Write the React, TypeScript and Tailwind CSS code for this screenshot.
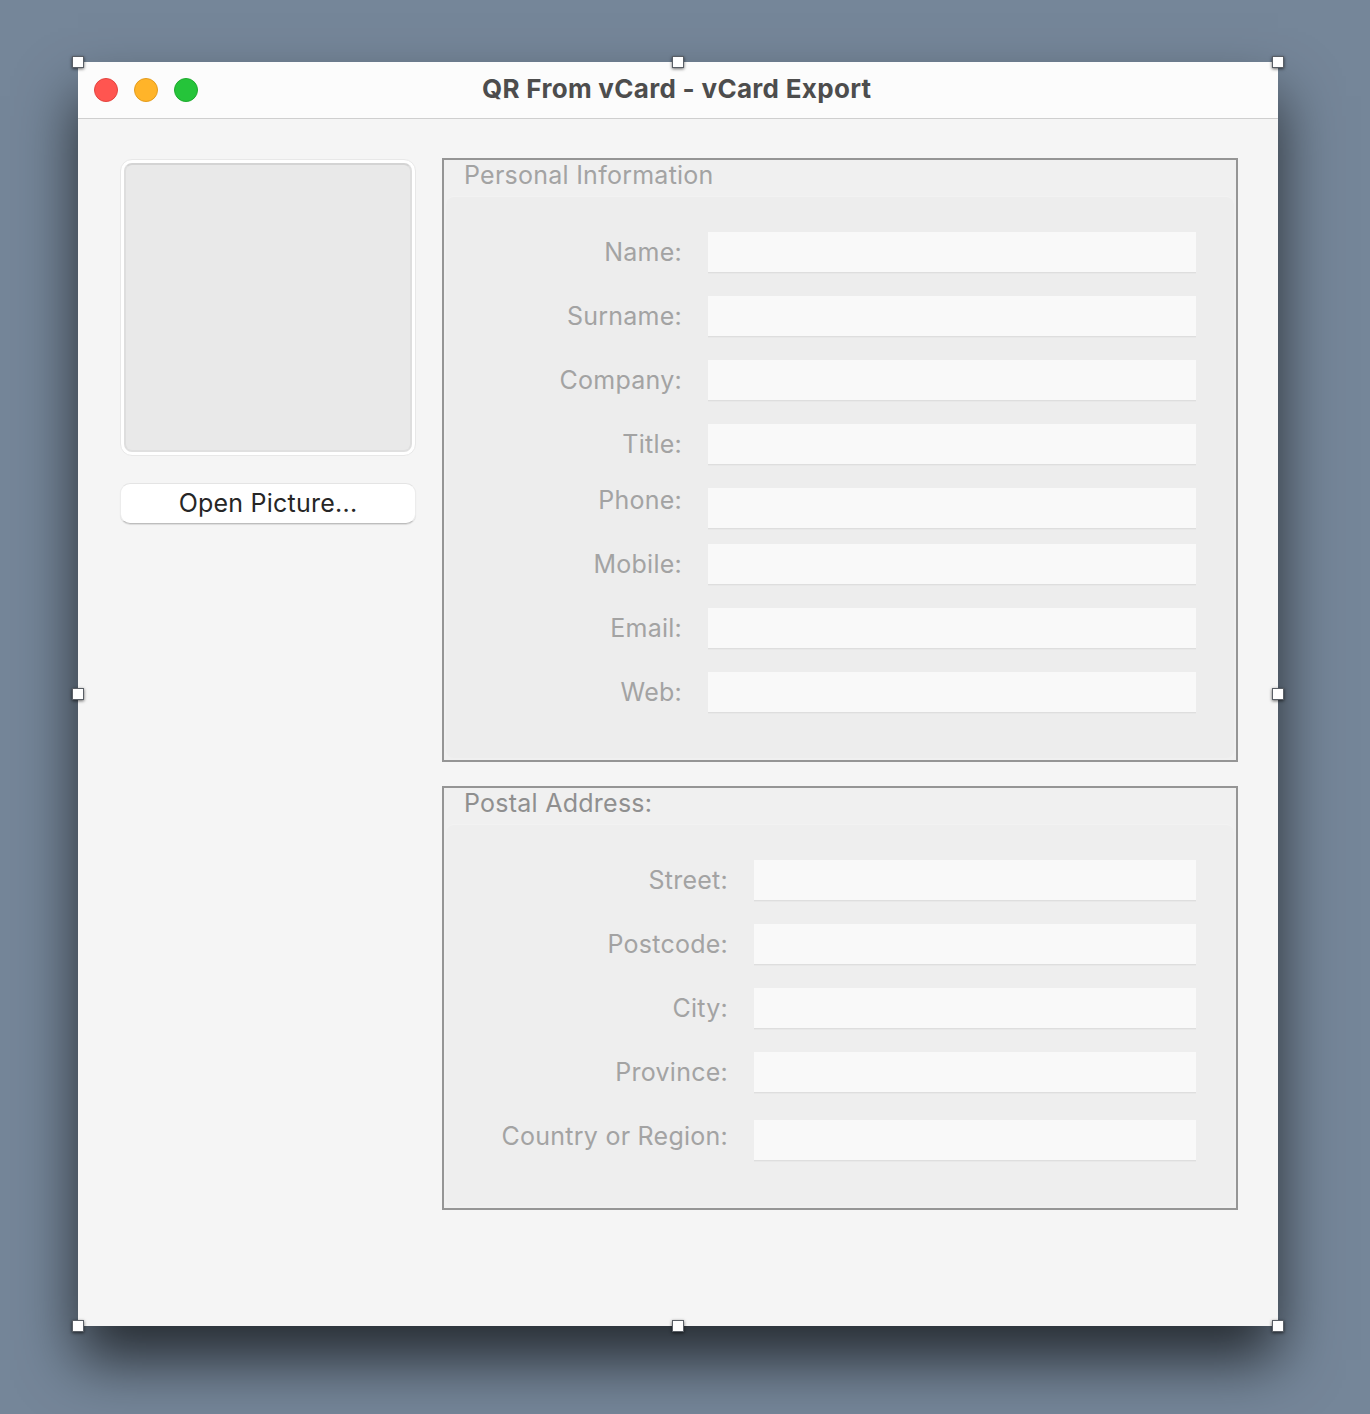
const font = { fontFamily: 'Inter, "Liberation Sans", sans-serif' };

function Handle({ className }: { className: string }) {
  return (
    <div
      className={`absolute w-[12px] h-[12px] bg-white border border-[#5a5f66] shadow-[0_1px_3px_rgba(0,0,0,0.6)] ${className}`}
    />
  );
}

function Field({
  label,
  labelW,
  inputW,
  mb,
  raise,
}: {
  label: string;
  labelW: string;
  inputW: string;
  mb: string;
  raise?: string;
}) {
  return (
    <div className={`flex h-[40px] items-center ${mb}`}>
      <div
        className={`${labelW} text-right text-[25px] leading-[32px] text-[#a3a3a3] tracking-[0.25px] ${raise ?? ""}`}
      >
        {label}
      </div>
      <div
        className={`${inputW} ml-[26px] self-start h-[41px] bg-[#f9f9f9] border-b border-[#dedede] shadow-[0_1px_0_#e8e8e8]`}
      />
    </div>
  );
}

function Group({
  title,
  titleColor,
  height,
  inner,
  children,
}: {
  title: string;
  titleColor: string;
  height: string;
  inner: string;
  children: React.ReactNode;
}) {
  return (
    <section className={`w-[796px] ${height} border-2 border-[#959595] bg-[#f0f0f0] flex flex-col`}>
      <div className={`h-[36px] pl-[20px] -mt-[1px] text-[25px] leading-[32px] tracking-[0.25px] ${titleColor}`}>{title}</div>
      <div className={`flex-1 mt-[1px] mx-[2px] mb-[2px] rounded-[8px] border-t border-[#f2f2f2] ${inner}`}>{children}</div>
    </section>
  );
}

export default function App() {
  return (
    <div className="h-[1414px] w-full overflow-hidden bg-[#758699] pl-[78px] pt-[62px]" style={font}>
      <div className="relative w-[1200px] h-[1264px] bg-[#f5f5f5] shadow-[0_34px_56px_0_rgba(0,0,0,0.68)]">
        <header className="relative h-[57px] bg-[#fcfcfc] border-b border-[#cfcfcf] flex items-center pl-[16px] gap-[16px]">
          <span className="w-[24px] h-[24px] rounded-full bg-[#ff5550] border border-[#e3443f]" />
          <span className="w-[24px] h-[24px] rounded-full bg-[#ffb429] border border-[#e39c1e]" />
          <span className="w-[24px] h-[24px] rounded-full bg-[#25c43a] border border-[#1eaa2e]" />
          <h1 className="absolute left-[404px] top-[9px] text-[26px] leading-[36px] font-bold tracking-[0.3px] text-[#4d4d4d] whitespace-nowrap">
            QR From vCard - vCard Export
          </h1>
        </header>

        <div className="flex pl-[42px] pt-[39px]">
          <aside className="w-[296px] mr-[26px]">
            <div className="mt-[1px] h-[297px] rounded-[12px] border border-[#e8e8e8] bg-white p-[3px]">
              <div className="h-full rounded-[8px] bg-[#e9e9e9] border-2 border-[#dedede] border-t-[#d4d4d4] border-b-[#e0e0e0]" />
            </div>
            <button className="mt-[27px] w-full h-[41px] rounded-[10px] bg-white text-[25px] text-[#262626] tracking-[0.23px] border border-[#ececec] border-t-[#e4e4e4] border-b-[#bdbdbd] shadow-[0_1px_1px_rgba(0,0,0,0.1)]">
              Open Picture...
            </button>
          </aside>

          <main className="flex flex-col gap-[24px]">
            <Group title="Personal Information" titleColor="text-[#a3a3a3]" height="h-[604px]" inner="bg-[#ededed]">
              <div className="pt-[35px] pl-[8px]">
                <Field label="Name:" labelW="w-[228px]" inputW="w-[488px]" mb="mb-[24px]" />
                <Field label="Surname:" labelW="w-[228px]" inputW="w-[488px]" mb="mb-[24px]" />
                <Field label="Company:" labelW="w-[228px]" inputW="w-[488px]" mb="mb-[24px]" />
                <Field label="Title:" labelW="w-[228px]" inputW="w-[488px]" mb="mb-[24px]" />
                <Field label="Phone:" labelW="w-[228px]" inputW="w-[488px]" mb="mb-[16px]" raise="self-start -mt-[4px]" />
                <Field label="Mobile:" labelW="w-[228px]" inputW="w-[488px]" mb="mb-[24px]" />
                <Field label="Email:" labelW="w-[228px]" inputW="w-[488px]" mb="mb-[24px]" />
                <Field label="Web:" labelW="w-[228px]" inputW="w-[488px]" mb="mb-0" />
              </div>
            </Group>
            <Group title="Postal Address:" titleColor="text-[#8f8f8f]" height="h-[424px]" inner="bg-[#eeeeee]">
              <div className="pt-[35px] pl-[8px]">
                <Field label="Street:" labelW="w-[274px]" inputW="w-[442px]" mb="mb-[24px]" />
                <Field label="Postcode:" labelW="w-[274px]" inputW="w-[442px]" mb="mb-[24px]" />
                <Field label="City:" labelW="w-[274px]" inputW="w-[442px]" mb="mb-[24px]" />
                <Field label="Province:" labelW="w-[274px]" inputW="w-[442px]" mb="mb-[28px]" />
                <Field label="Country or Region:" labelW="w-[274px]" inputW="w-[442px]" mb="mb-0" raise="self-start" />
              </div>
            </Group>
          </main>
        </div>

        <Handle className="-left-[6px] -top-[6px]" />
        <Handle className="left-[594px] -top-[6px]" />
        <Handle className="-right-[6px] -top-[6px]" />
        <Handle className="-left-[6px] top-[626px]" />
        <Handle className="-right-[6px] top-[626px]" />
        <Handle className="-left-[6px] -bottom-[6px]" />
        <Handle className="left-[594px] -bottom-[6px]" />
        <Handle className="-right-[6px] -bottom-[6px]" />
      </div>
    </div>
  );
}
